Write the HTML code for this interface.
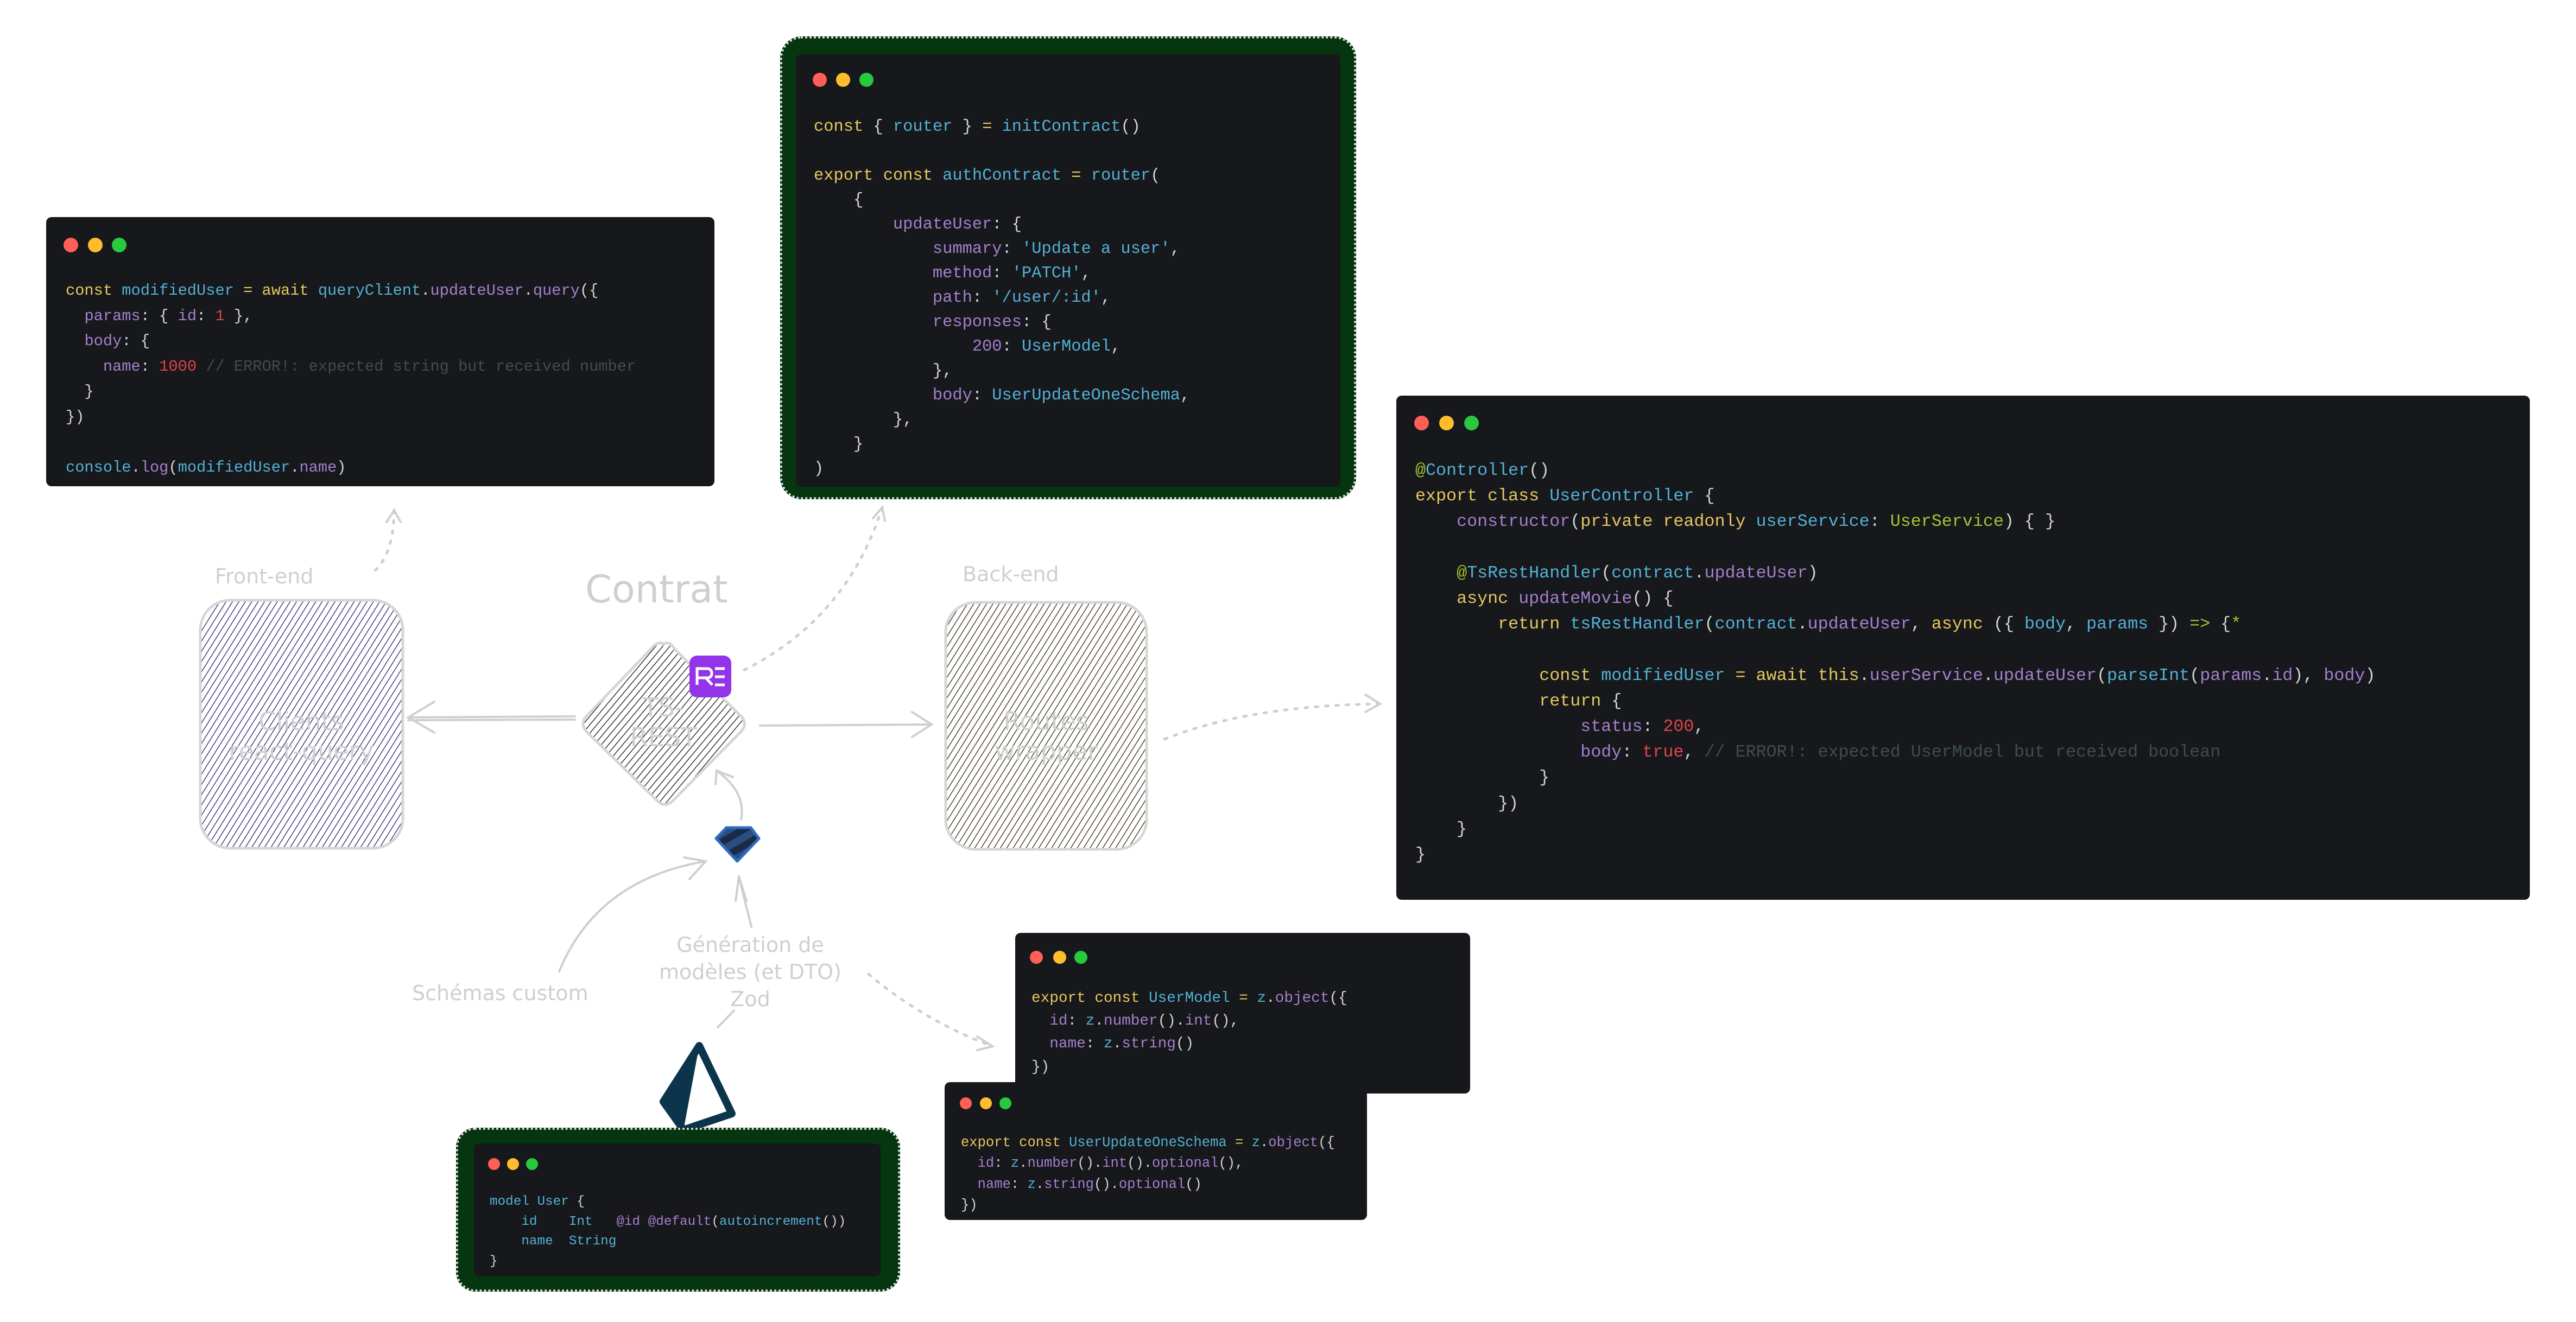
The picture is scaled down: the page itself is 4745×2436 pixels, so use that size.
<!DOCTYPE html>
<html><head><meta charset="utf-8"><style>
html,body{margin:0;padding:0;background:#fff;}
body{width:4745px;height:2436px;position:relative;overflow:hidden;font-family:"Liberation Sans",sans-serif;}
.card{position:absolute;background:#17181b;border-radius:10px;}
.frame{position:absolute;background:#053610;border-radius:40px;outline:none;border:4px dotted #e4e4e4;box-sizing:border-box;}
pre{position:absolute;margin:0;font-family:"Liberation Mono","DejaVu Sans Mono",monospace;color:#d4d4d4;white-space:pre;}
.dot{position:absolute;border-radius:50%;}
.r{background:#ff5f56}.y{background:#ffbd2e}.g{background:#27c93f}
.k{color:#e6c75f}.c{color:#52b1d6}.p{color:#a47fce}.n{color:#e0434c}.cm{color:#3f4b54}.d{color:#a6c232}
.lbl{position:absolute;color:#cfcfcf;font-family:"DejaVu Sans",sans-serif;white-space:nowrap;}
</style></head><body>

<svg width="4745" height="2436" style="position:absolute;left:0;top:0">
<defs>
<pattern id="hp" width="10" height="10" patternUnits="userSpaceOnUse" patternTransform="rotate(32)"><line x1="0" y1="0" x2="0" y2="10" stroke="#433a7e" stroke-width="3"/></pattern>
<pattern id="hb" width="10" height="10" patternUnits="userSpaceOnUse" patternTransform="rotate(32)"><line x1="0" y1="0" x2="0" y2="10" stroke="#4e4430" stroke-width="3"/></pattern>
<pattern id="hk" width="10" height="10" patternUnits="userSpaceOnUse" patternTransform="rotate(40)"><line x1="0" y1="0" x2="0" y2="10" stroke="#111" stroke-width="2.6"/></pattern>
<pattern id="gs" width="26" height="26" patternUnits="userSpaceOnUse" patternTransform="rotate(-30)"><rect width="26" height="13" fill="#1b2a45"/><rect y="13" width="26" height="13" fill="#2b4e82"/></pattern>
</defs>
<rect x="369" y="1106" width="373" height="457" rx="55" fill="url(#hp)" stroke="#d6d6d6" stroke-width="5"/>
<rect x="1742" y="1110" width="370" height="455" rx="55" fill="url(#hb)" stroke="#d6d6d6" stroke-width="5"/>
<path d="M1222,1187 Q1232,1180 1242,1195 L1365,1320 Q1378,1333 1365,1348 L1240,1475 Q1225,1490 1210,1475 L1080,1348 Q1068,1333 1080,1320 L1200,1195 Q1212,1180 1222,1187Z" fill="url(#hk)" stroke="#d6d6d6" stroke-width="5"/>
<text x="1222" y="1320" font-size="48" fill="#d0d0d0" text-anchor="middle" font-family="DejaVu Sans">TS-</text>
<text x="1222" y="1375" font-size="48" fill="#d0d0d0" text-anchor="middle" font-family="DejaVu Sans">REST</text>
<text x="555" y="1345" font-size="46" fill="#cfcfcf" text-anchor="middle" font-family="DejaVu Sans">Clients</text>
<text x="555" y="1400" font-size="46" fill="#cfcfcf" text-anchor="middle" font-family="DejaVu Sans">react-query</text>
<text x="1927" y="1345" font-size="46" fill="#cfcfcf" text-anchor="middle" font-family="DejaVu Sans">Routes</text>
<text x="1927" y="1400" font-size="46" fill="#cfcfcf" text-anchor="middle" font-family="DejaVu Sans">wrapper</text>
<rect x="1270" y="1208" width="77" height="77" rx="14" fill="#9333ea"/>
<path d="M1284,1262 V1232 H1302 Q1311,1232 1311,1241 Q1311,1249 1302,1249 H1286 M1300,1249 L1312,1262" fill="none" stroke="#fff" stroke-width="5"/>
<path d="M1317,1232 H1335 M1317,1247 H1335 M1317,1262 H1335" stroke="#fff" stroke-width="5"/>
<path d="M1338,1525 H1383 L1398,1545 L1358,1587 L1319,1545 Z" fill="url(#gs)" stroke="#2f6bbf" stroke-width="5" stroke-linejoin="round"/>
<path d="M1288,1927 L1222,2030 L1259,2082 L1348,2052 Z" fill="none" stroke="#0c344b" stroke-width="14" stroke-linejoin="round"/>
<path d="M1288,1927 L1222,2030 L1259,2082 Z" fill="#0c344b"/>
<g fill="none" stroke="#cfcfcf" stroke-width="4" stroke-linecap="round">
<path d="M1059,1320 L752,1322 M1059,1326 L752,1327"/>
<path d="M800,1293 L752,1322 L800,1350"/>
<path d="M1400,1337 L1716,1335"/>
<path d="M1680,1312 L1716,1335 L1680,1358"/>
<path d="M1365,1510 Q1375,1460 1320,1420"/>
<path d="M1318,1445 L1320,1420 L1350,1432"/>
<path d="M1030,1790 Q1100,1620 1300,1587"/>
<path d="M1260,1580 L1300,1587 L1270,1620"/>
<path d="M1384,1708 L1361,1615"/>
<path d="M1355,1660 L1361,1615 L1375,1660"/>
<path d="M1352,1862 L1322,1893"/>
</g>
<g fill="none" stroke="#cfcfcf" stroke-width="5" stroke-dasharray="5 14" stroke-linecap="round">
<path d="M726,940 Q725,1030 681,1059"/>
<path d="M1625,935 Q1560,1140 1370,1235"/>
<path d="M2145,1362 Q2300,1300 2542,1297"/>
<path d="M1600,1795 Q1700,1880 1828,1928"/>
</g>
<g fill="none" stroke="#cfcfcf" stroke-width="4" stroke-linecap="round">
<path d="M712,962 L726,940 L738,962"/>
<path d="M1608,955 L1625,935 L1630,960"/>
<path d="M2515,1280 L2542,1297 L2515,1312"/>
<path d="M1800,1910 L1828,1928 L1800,1935"/>
</g>
</svg>

<div class="lbl" style="left:396px;top:1040px;font-size:38px">Front-end</div>
<div class="lbl" style="left:1773px;top:1036px;font-size:38px">Back-end</div>
<div class="lbl" style="left:1078px;top:1045px;font-size:70px">Contrat</div>
<div class="lbl" style="left:759px;top:1808px;font-size:38px">Schémas custom</div>
<div class="lbl" style="left:1382px;top:1716px;font-size:38px;transform:translateX(-50%);text-align:center;line-height:50px">Génération de<br>modèles (et DTO)<br>Zod</div>

<div class="card" style="left:85px;top:400px;width:1231px;height:496px">
<div class="dot r" style="left:32px;top:38px;width:27px;height:27px"></div>
<div class="dot y" style="left:77px;top:38px;width:27px;height:27px"></div>
<div class="dot g" style="left:121px;top:38px;width:27px;height:27px"></div>
</div>
<pre style="left:121px;top:513px;font-size:28.7px;line-height:46.6px"><span class="k">const</span> <span class="c">modifiedUser</span> <span class="k">=</span> <span class="k">await</span> <span class="c">queryClient</span>.<span class="p">updateUser</span>.<span class="p">query</span>({
  <span class="p">params</span>: { <span class="p">id</span>: <span class="n">1</span> },
  <span class="p">body</span>: {
    <span class="p">name</span>: <span class="n">1000</span> <span class="cm">// ERROR!: expected string but received number</span>
  }
})

<span class="c">console</span>.<span class="p">log</span>(<span class="c">modifiedUser</span>.<span class="p">name</span>)</pre>

<div class="frame" style="left:1437px;top:67px;width:1061px;height:853px"></div>
<div class="card" style="left:1466px;top:100px;width:1003px;height:797px">
<div class="dot r" style="left:31px;top:34px;width:26px;height:26px"></div>
<div class="dot y" style="left:74px;top:34px;width:26px;height:26px"></div>
<div class="dot g" style="left:117px;top:34px;width:26px;height:26px"></div>
</div>
<pre style="left:1499px;top:212px;font-size:30.4px;line-height:45px"><span class="k">const</span> { <span class="c">router</span> } <span class="k">=</span> <span class="c">initContract</span>()

<span class="k">export</span> <span class="k">const</span> <span class="c">authContract</span> <span class="k">=</span> <span class="c">router</span>(
    {
        <span class="p">updateUser</span>: {
            <span class="p">summary</span>: <span class="c">'Update a user'</span>,
            <span class="p">method</span>: <span class="c">'PATCH'</span>,
            <span class="p">path</span>: <span class="c">'/user/:id'</span>,
            <span class="p">responses</span>: {
                <span class="p">200</span>: <span class="c">UserModel</span>,
            },
            <span class="p">body</span>: <span class="c">UserUpdateOneSchema</span>,
        },
    }
)</pre>

<div class="card" style="left:2572px;top:729px;width:2088px;height:929px">
<div class="dot r" style="left:33px;top:37px;width:27px;height:27px"></div>
<div class="dot y" style="left:79px;top:37px;width:27px;height:27px"></div>
<div class="dot g" style="left:125px;top:37px;width:27px;height:27px"></div>
</div>
<pre style="left:2607px;top:844px;font-size:31.7px;line-height:47.2px"><span class="d">@</span><span class="c">Controller</span>()
<span class="k">export</span> <span class="k">class</span> <span class="c">UserController</span> {
    <span class="p">constructor</span>(<span class="k">private</span> <span class="k">readonly</span> <span class="c">userService</span>: <span class="d">UserService</span>) { }

    <span class="d">@</span><span class="c">TsRestHandler</span>(<span class="c">contract</span>.<span class="p">updateUser</span>)
    <span class="k">async</span> <span class="p">updateMovie</span>() {
        <span class="k">return</span> <span class="c">tsRestHandler</span>(<span class="c">contract</span>.<span class="p">updateUser</span>, <span class="k">async</span> ({ <span class="c">body</span>, <span class="c">params</span> }) <span class="d">=&gt;</span> {<span class="d">*</span>

            <span class="k">const</span> <span class="c">modifiedUser</span> <span class="k">=</span> <span class="k">await</span> <span class="k">this</span>.<span class="p">userService</span>.<span class="p">updateUser</span>(<span class="c">parseInt</span>(<span class="p">params</span>.<span class="p">id</span>), <span class="p">body</span>)
            <span class="k">return</span> {
                <span class="p">status</span>: <span class="n">200</span>,
                <span class="p">body</span>: <span class="n">true</span>, <span class="cm">// ERROR!: expected UserModel but received boolean</span>
            }
        })
    }
}</pre>

<div class="card" style="left:1870px;top:1719px;width:838px;height:296px">
<div class="dot r" style="left:27px;top:33px;width:24px;height:24px"></div>
<div class="dot y" style="left:70px;top:33px;width:24px;height:24px"></div>
<div class="dot g" style="left:109px;top:33px;width:24px;height:24px"></div>
</div>
<pre style="left:1900px;top:1819px;font-size:27.7px;line-height:42.2px"><span class="k">export</span> <span class="k">const</span> <span class="c">UserModel</span> <span class="k">=</span> <span class="c">z</span>.<span class="p">object</span>({
  <span class="p">id</span>: <span class="c">z</span>.<span class="p">number</span>().<span class="p">int</span>(),
  <span class="p">name</span>: <span class="c">z</span>.<span class="p">string</span>()
})</pre>

<div class="card" style="left:1740px;top:1994px;width:778px;height:254px">
<div class="dot r" style="left:28px;top:28px;width:22px;height:22px"></div>
<div class="dot y" style="left:65px;top:28px;width:22px;height:22px"></div>
<div class="dot g" style="left:101px;top:28px;width:22px;height:22px"></div>
</div>
<pre style="left:1770px;top:2087px;font-size:25.5px;line-height:38.3px"><span class="k">export</span> <span class="k">const</span> <span class="c">UserUpdateOneSchema</span> <span class="k">=</span> <span class="c">z</span>.<span class="p">object</span>({
  <span class="p">id</span>: <span class="c">z</span>.<span class="p">number</span>().<span class="p">int</span>().<span class="p">optional</span>(),
  <span class="p">name</span>: <span class="c">z</span>.<span class="p">string</span>().<span class="p">optional</span>()
})</pre>

<div class="frame" style="left:840px;top:2078px;width:818px;height:302px;border-radius:36px"></div>
<div class="card" style="left:873px;top:2107px;width:749px;height:245px">
<div class="dot r" style="left:26px;top:27px;width:22px;height:22px"></div>
<div class="dot y" style="left:61px;top:27px;width:22px;height:22px"></div>
<div class="dot g" style="left:96px;top:27px;width:22px;height:22px"></div>
</div>
<pre style="left:902px;top:2197px;font-size:24.3px;line-height:36.5px"><span class="c">model</span> <span class="c">User</span> {
    <span class="c">id</span>    <span class="c">Int</span>   <span class="p">@id</span> <span class="p">@default</span>(<span class="c">autoincrement</span>())
    <span class="c">name</span>  <span class="c">String</span>
}</pre>

</body></html>
